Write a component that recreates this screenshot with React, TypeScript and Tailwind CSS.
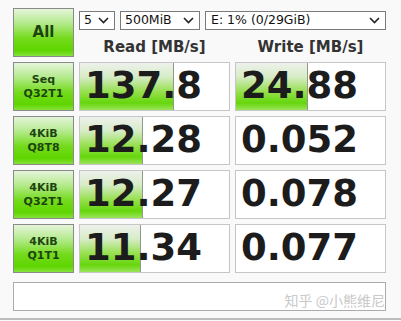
import React from "react";

const rows = [
  { l1: "Seq", l2: "Q32T1", read: "137.8", readBar: 94, write: "24.88", writeBar: 72 },
  { l1: "4KiB", l2: "Q8T8", read: "12.28", readBar: 63, write: "0.052", writeBar: 0 },
  { l1: "4KiB", l2: "Q32T1", read: "12.27", readBar: 63, write: "0.078", writeBar: 0 },
  { l1: "4KiB", l2: "Q1T1", read: "11.34", readBar: 61, write: "0.077", writeBar: 0 },
];

const btn =
  "border border-[#8a8a8a] bg-[linear-gradient(to_bottom,#e4f5da_0%,#b5ea8e_30%,#74db1c_62%,#5fd500_88%,#86e23a_100%)] text-[#1d4410] font-bold flex flex-col items-center justify-center";

function Chevron() {
  return (
    <svg width="11" height="7" viewBox="0 0 11 7" className="shrink-0">
      <path d="M1 1 L5.5 5.5 L10 1" fill="none" stroke="#222" strokeWidth="1.6" />
    </svg>
  );
}

function Select({ label, className }: { label: string; className: string }) {
  return (
    <div
      className={`h-[19px] border border-[#7a7a7a] bg-white flex items-center justify-between pl-[4px] pr-[5px] text-[12.5px] text-[#111] ${className}`}
    >
      <span>{label}</span>
      <Chevron />
    </div>
  );
}

function Cell({ value, bar }: { value: string; bar: number }) {
  return (
    <div className="relative h-[49px] w-[151px] border border-[#c6c6c6] bg-white overflow-hidden">
      {bar > 0 && (
        <div
          className="absolute left-0 top-0 bottom-0 border-r border-[#8f9a88] bg-[linear-gradient(to_bottom,#eef1ec_0%,#d6ecc6_30%,#98e052_60%,#66d60c_85%,#9be45a_100%)]"
          style={{ width: bar }}
        />
      )}
      <span className="relative block pl-[5px] leading-[46px] text-[37px] font-bold text-[#1c1c1c]">
        {value}
      </span>
    </div>
  );
}

export default function App() {
  return (
    <div
      className="w-[401px] h-[321px] bg-[#f9f9f9] relative overflow-hidden"
      style={{ fontFamily: '"DejaVu Sans", Verdana, sans-serif' }}
    >
      <div className="pl-[13px] pt-[8px] flex flex-col gap-[5px]">
        <div className="flex gap-[5px]">
          <div className={`${btn} w-[61px] h-[49px] text-[15px]`}>All</div>
          <div className="flex flex-col h-[49px]">
            <div className="flex gap-[5px] mt-[3px]">
              <Select label="5" className="w-[36px]" />
              <Select label="500MiB" className="w-[80px]" />
              <Select label="E: 1% (0/29GiB)" className="w-[181px] pl-[5px]" />
            </div>
            <div className="flex gap-[5px] mt-[7px] h-[20px] leading-[20px] text-[15px] font-bold text-[#333]">
              <div className="w-[151px] text-center">Read [MB/s]</div>
              <div className="w-[151px] text-center">Write [MB/s]</div>
            </div>
          </div>
        </div>
        {rows.map((r, i) => (
          <div key={i} className="flex gap-[5px]">
            <div className={`${btn} w-[61px] h-[49px] text-[11px] leading-[14px]`}>
              <span>{r.l1}</span>
              <span>{r.l2}</span>
            </div>
            <Cell value={r.read} bar={r.readBar} />
            <Cell value={r.write} bar={r.writeBar} />
          </div>
        ))}
        <div className="mt-[4px] w-[373px] h-[29px] border border-[#ababab] bg-white flex items-end justify-end pb-[3px]">
          <span
            className="text-[14px] text-[#c9c9c9] leading-none"
            style={{ fontFamily: '"Noto Sans CJK SC", "DejaVu Sans", sans-serif' }}
          >
            知乎 @小熊维尼
          </span>
        </div>
      </div>
      <div className="absolute left-0 right-0 top-[318px] h-[2px] bg-[#bcbcbc]" />
    </div>
  );
}
